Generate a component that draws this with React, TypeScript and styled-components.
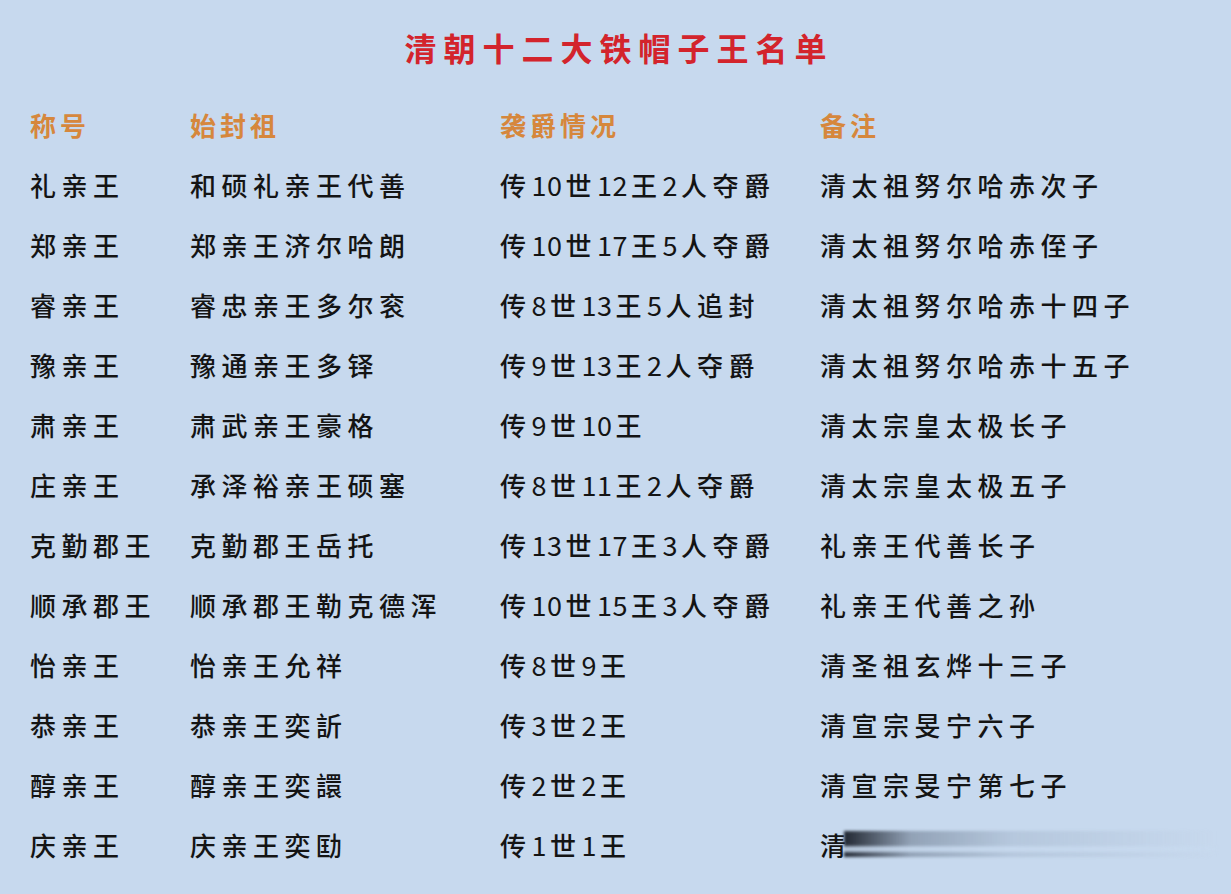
import { Fragment } from "react";
import styled, { createGlobalStyle } from "styled-components";

const GlobalStyle = createGlobalStyle`
  html, body {
    margin: 0;
    padding: 0;
    background: #c7d9ee;
  }
`;

const Page = styled.div`
  width: 1231px;
  height: 894px;
  background: #c7d9ee;
  font-family: "Noto Sans CJK SC", "Noto Sans", sans-serif;
  overflow: hidden;
`;

const Title = styled.h1`
  margin: 0;
  height: 94px;
  line-height: 94px;
  text-align: center;
  font-size: 32px;
  font-weight: 700;
  letter-spacing: 7px;
  color: #d3242c;
  padding-left: 7px;
`;

const Table = styled.div`
  display: grid;
  grid-template-columns: 160px 310px 320px 1fr;
  grid-auto-rows: 60px;
  padding-left: 30px;
`;

const Cell = styled.div<{ $head?: boolean }>`
  display: flex;
  align-items: center;
  white-space: nowrap;
  font-size: 26px;
  font-weight: ${({ $head }) => ($head ? 700 : 500)};
  letter-spacing: ${({ $head }) => ($head ? "4px" : "5.5px")};
  color: ${({ $head }) => ($head ? "#d6873c" : "#141414")};
`;

const Num = styled.span`
  letter-spacing: 0.5px;
  margin-right: 3px;
  font-size: 27px;
  font-weight: 400;
`;

const Smear = styled.span`
  display: inline-block;
  width: 372px;
  height: 26px;
  margin-left: -8px;
  background:
    linear-gradient(
      to bottom,
      transparent 0%,
      rgba(255, 255, 255, 0) 55%,
      rgba(199, 217, 238, 0.9) 62%,
      rgba(199, 217, 238, 0.9) 78%,
      transparent 84%
    ),
    linear-gradient(
      to right,
      rgba(25, 30, 40, 0.95) 0%,
      rgba(110, 125, 145, 0.6) 18%,
      rgba(160, 178, 200, 0.45) 45%,
      rgba(185, 202, 224, 0.3) 85%,
      rgba(199, 217, 238, 0) 100%
    );
  filter: blur(1.5px);
`;

const withNums = (text: string) =>
  text.split(/(\d+)/).map((part, i) =>
    /^\d+$/.test(part) ? <Num key={i}>{part}</Num> : <span key={i}>{part}</span>
  );

const rows: [string, string, string, string][] = [
  ["礼亲王", "和硕礼亲王代善", "传10世12王2人夺爵", "清太祖努尔哈赤次子"],
  ["郑亲王", "郑亲王济尔哈朗", "传10世17王5人夺爵", "清太祖努尔哈赤侄子"],
  ["睿亲王", "睿忠亲王多尔衮", "传8世13王5人追封", "清太祖努尔哈赤十四子"],
  ["豫亲王", "豫通亲王多铎", "传9世13王2人夺爵", "清太祖努尔哈赤十五子"],
  ["肃亲王", "肃武亲王豪格", "传9世10王", "清太宗皇太极长子"],
  ["庄亲王", "承泽裕亲王硕塞", "传8世11王2人夺爵", "清太宗皇太极五子"],
  ["克勤郡王", "克勤郡王岳托", "传13世17王3人夺爵", "礼亲王代善长子"],
  ["顺承郡王", "顺承郡王勒克德浑", "传10世15王3人夺爵", "礼亲王代善之孙"],
  ["怡亲王", "怡亲王允祥", "传8世9王", "清圣祖玄烨十三子"],
  ["恭亲王", "恭亲王奕訢", "传3世2王", "清宣宗旻宁六子"],
  ["醇亲王", "醇亲王奕譞", "传2世2王", "清宣宗旻宁第七子"],
];

export default function App() {
  return (
    <Page>
      <GlobalStyle />
      <Title>清朝十二大铁帽子王名单</Title>
      <Table>
        <Cell $head>称号</Cell>
        <Cell $head>始封祖</Cell>
        <Cell $head>袭爵情况</Cell>
        <Cell $head>备注</Cell>
        {rows.map((r) => (
          <Fragment key={r[0]}>
            <Cell>{r[0]}</Cell>
            <Cell>{r[1]}</Cell>
            <Cell>{withNums(r[2])}</Cell>
            <Cell>{r[3]}</Cell>
          </Fragment>
        ))}
        <Cell>庆亲王</Cell>
        <Cell>庆亲王奕劻</Cell>
        <Cell>{withNums("传1世1王")}</Cell>
        <Cell>
          清<Smear />
        </Cell>
      </Table>
    </Page>
  );
}
